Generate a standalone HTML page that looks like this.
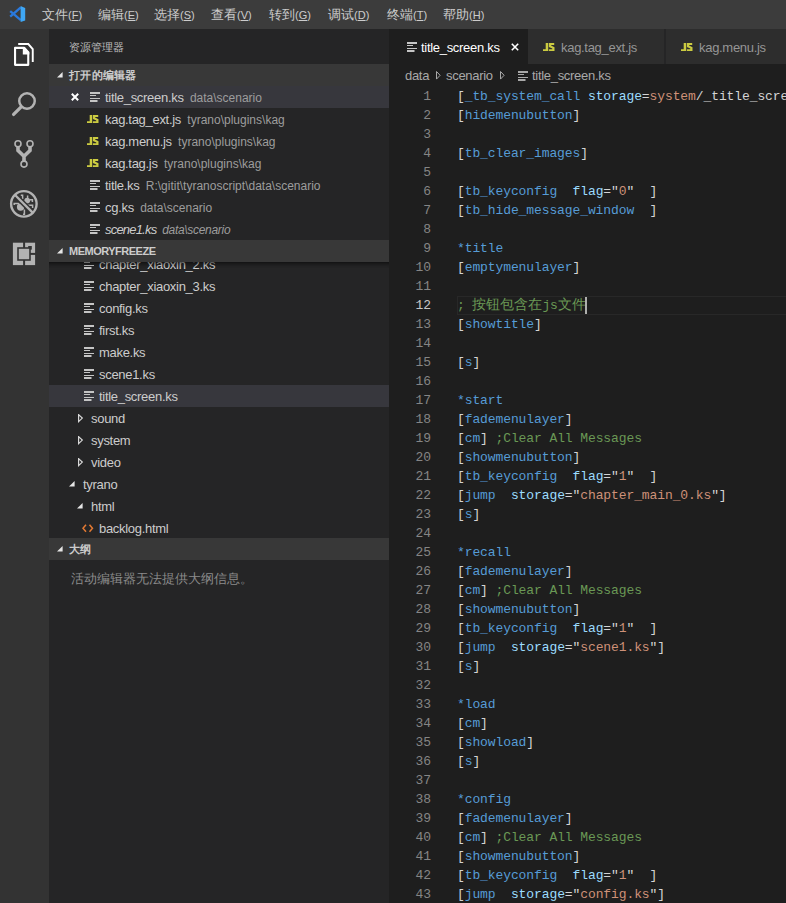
<!DOCTYPE html><html><head><meta charset="utf-8"><style>
*{margin:0;padding:0;box-sizing:border-box}
html,body{width:786px;height:903px;overflow:hidden;background:#1e1e1e;font-family:"Liberation Sans",sans-serif}
.abs{position:absolute}
.t{position:absolute;white-space:nowrap}
#title{left:0;top:0;width:786px;height:29px;background:#3c3c3c}
.menu{position:absolute;top:0;height:29px;line-height:29px;font-size:13px;color:#cccccc;white-space:nowrap}
#act{left:0;top:29px;width:49px;height:874px;background:#333333}
#side{left:49px;top:29px;width:340px;height:874px;background:#252526;overflow:hidden}
#editor{left:389px;top:29px;width:397px;height:874px;background:#1e1e1e;overflow:hidden}
.row{position:absolute;left:0;width:340px;height:22px;line-height:22px;font-size:13px;color:#cccccc;white-space:nowrap}
.nm{letter-spacing:-0.3px;top:1px}
.desc{font-size:12px;color:#9d9d9d;letter-spacing:0;margin-left:3px}
.hdr{position:absolute;left:0;width:340px;height:22px;line-height:22px;background:#383838;font-size:11px;font-weight:bold;color:#cccccc;letter-spacing:-0.5px}
.code{position:absolute;left:68px;font-family:"Liberation Mono",monospace;font-size:13px;letter-spacing:-0.1px;white-space:pre;height:19px;line-height:19px;color:#d4d4d4}
.ln{position:absolute;left:0;width:42px;text-align:right;font-family:"Liberation Mono",monospace;font-size:13px;letter-spacing:-0.1px;height:19px;line-height:19px;color:#858585}
.k{color:#569cd6}.p{color:#9cdcfe}.s{color:#ce9178}.c{color:#6a9955}
.cj{font-size:14px;letter-spacing:0}
</style></head><body>
<div id="title" class="abs">
<svg class="abs" style="left:0;top:0" width="30" height="29" viewBox="0 0 30 29"><path d="M10.2 11.2 L20.8 20.2" stroke="#2a79dd" stroke-width="2.3"/><path d="M10.2 16.6 L20.8 7.4" stroke="#2a79dd" stroke-width="2.3"/><path d="M20.6 6 L25.2 8 L25.2 20.4 L20.6 22 Z" fill="#3fa7f5"/></svg>
<div class="menu" style="left:42px">文件<span style="font-size:11px">(<u>F</u>)</span></div>
<div class="menu" style="left:98px">编辑<span style="font-size:11px">(<u>E</u>)</span></div>
<div class="menu" style="left:154px">选择<span style="font-size:11px">(<u>S</u>)</span></div>
<div class="menu" style="left:211px">查看<span style="font-size:11px">(<u>V</u>)</span></div>
<div class="menu" style="left:269px">转到<span style="font-size:11px">(<u>G</u>)</span></div>
<div class="menu" style="left:328px">调试<span style="font-size:11px">(<u>D</u>)</span></div>
<div class="menu" style="left:387px">终端<span style="font-size:11px">(<u>T</u>)</span></div>
<div class="menu" style="left:443px">帮助<span style="font-size:11px">(<u>H</u>)</span></div>
</div>
<div id="act" class="abs"></div>
<svg class="abs" style="left:0;top:0" width="49" height="300" viewBox="0 0 49 300"><path d="M15.05 47.85 H24.3 L28.25 52.2 V64.85 H15.05 Z" fill="none" stroke="#ffffff" stroke-width="2.1" stroke-linejoin="round"/><path d="M22.8 47 H24.6 L29.3 52.4 V54.4 H22.8 Z" fill="#ffffff"/><path d="M18.2 44 H28.3 L32.75 49 V62" fill="none" stroke="#ffffff" stroke-width="1.9"/><circle cx="27" cy="101" r="7.75" fill="none" stroke="#b3b3b3" stroke-width="2.5"/><path d="M21.2 106.8 L13.6 114.4" stroke="#b3b3b3" stroke-width="3.3" stroke-linecap="round"/><circle cx="18" cy="143.8" r="3.0" fill="none" stroke="#b3b3b3" stroke-width="1.6"/><circle cx="30" cy="143.8" r="3.0" fill="none" stroke="#b3b3b3" stroke-width="1.6"/><circle cx="24" cy="164.1" r="3.0" fill="none" stroke="#b3b3b3" stroke-width="1.6"/><path d="M18 146.5 V150.5 L24 156.3 L30 150.5 V146.5 M24 155 V161.3" fill="none" stroke="#b3b3b3" stroke-width="3.6"/><circle cx="23.85" cy="203.85" r="12.75" fill="none" stroke="#b3b3b3" stroke-width="2.4"/><ellipse cx="20.6" cy="207.0" rx="3.7" ry="3.7" fill="#b3b3b3"/><ellipse cx="27.2" cy="200.6" rx="2.9" ry="2.9" fill="#b3b3b3"/><path d="M14.2 205 V203.4 H19 M23 214.2 H24.4 V209.5 M20.8 195.3 H22.6 V199 M28 205.2 H32.6 V208 M29.5 199.8 H32.4 V202 M27.6 198 V195.6" fill="none" stroke="#b3b3b3" stroke-width="1.5"/><path d="M16.6 196.6 L31.1 211.1" stroke="#333333" stroke-width="5.2"/><path d="M14.8 194.8 L32.9 212.9" stroke="#b3b3b3" stroke-width="2.3"/><rect x="12.9" y="242.7" width="22.2" height="22.4" fill="#b3b3b3"/><rect x="17.2" y="247.2" width="13.6" height="13.6" fill="#333333"/><rect x="23.1" y="242" width="2" height="24" fill="#333333"/><rect x="30" y="252.9" width="6" height="2" fill="#333333"/><rect x="28.2" y="246" width="3.6" height="3.6" fill="#333333"/><rect x="18.8" y="248.8" width="10.4" height="10.4" fill="#b3b3b3"/></svg>
<div id="side" class="abs">
<div class="t" style="left:20px;top:1px;height:35px;line-height:35px;font-size:11px;color:#bbbbbb">资源管理器</div>
<div class="hdr" style="top:35px"><svg class="abs" style="left:7.5px;top:7.8px" width="6" height="6" viewBox="0 0 6 6"><path d="M5.6 0 V5.6 H0 Z" fill="#e6e6e6"/></svg><span class="t" style="left:20px;letter-spacing:0.3px">打开的编辑器</span></div>
<div class="row" style="top:57px;background:#37373d;"><svg class="abs" style="left:22px;top:7px" width="8" height="8" viewBox="0 0 8 8"><path d="M0.8 0.8 L7.2 7.2 M7.2 0.8 L0.8 7.2" stroke="#ffffff" stroke-width="2"/></svg><svg class="abs" style="left:41px;top:6px" width="10" height="10" viewBox="0 0 10 10"><rect x="0" y="0" width="10" height="2" fill="#c5c5c5"/><rect x="0" y="3" width="6" height="1" fill="#c5c5c5"/><rect x="0" y="6" width="10" height="1" fill="#c5c5c5"/><rect x="0" y="8" width="7.5" height="2" fill="#c5c5c5"/></svg><span class="t nm" style="left:56px;">title_screen.ks <span class="desc" style="">data\scenario</span></span></div>
<div class="row" style="top:79px;"><svg class="abs" style="left:38.2px;top:7.4px" width="12" height="9" viewBox="0 0 12 9"><path d="M2.7 0 H5.2 V8.1 H0 V6.2 H2.7 Z" fill="#cbcb41"/><path d="M5.9 0 H11.2 V2 H8.1 V2.6 L11.5 4.2 V8.1 H5.9 V6.2 H9.3 V5.5 L5.9 3.9 Z" fill="#cbcb41"/></svg><span class="t nm" style="left:56px;">kag.tag_ext.js <span class="desc" style="">tyrano\plugins\kag</span></span></div>
<div class="row" style="top:101px;"><svg class="abs" style="left:38.2px;top:7.4px" width="12" height="9" viewBox="0 0 12 9"><path d="M2.7 0 H5.2 V8.1 H0 V6.2 H2.7 Z" fill="#cbcb41"/><path d="M5.9 0 H11.2 V2 H8.1 V2.6 L11.5 4.2 V8.1 H5.9 V6.2 H9.3 V5.5 L5.9 3.9 Z" fill="#cbcb41"/></svg><span class="t nm" style="left:56px;">kag.menu.js <span class="desc" style="">tyrano\plugins\kag</span></span></div>
<div class="row" style="top:123px;"><svg class="abs" style="left:38.2px;top:7.4px" width="12" height="9" viewBox="0 0 12 9"><path d="M2.7 0 H5.2 V8.1 H0 V6.2 H2.7 Z" fill="#cbcb41"/><path d="M5.9 0 H11.2 V2 H8.1 V2.6 L11.5 4.2 V8.1 H5.9 V6.2 H9.3 V5.5 L5.9 3.9 Z" fill="#cbcb41"/></svg><span class="t nm" style="left:56px;">kag.tag.js <span class="desc" style="">tyrano\plugins\kag</span></span></div>
<div class="row" style="top:145px;"><svg class="abs" style="left:41px;top:6px" width="10" height="10" viewBox="0 0 10 10"><rect x="0" y="0" width="10" height="2" fill="#c5c5c5"/><rect x="0" y="3" width="6" height="1" fill="#c5c5c5"/><rect x="0" y="6" width="10" height="1" fill="#c5c5c5"/><rect x="0" y="8" width="7.5" height="2" fill="#c5c5c5"/></svg><span class="t nm" style="left:56px;">title.ks <span class="desc" style="">R:\gitit\tyranoscript\data\scenario</span></span></div>
<div class="row" style="top:167px;"><svg class="abs" style="left:41px;top:6px" width="10" height="10" viewBox="0 0 10 10"><rect x="0" y="0" width="10" height="2" fill="#c5c5c5"/><rect x="0" y="3" width="6" height="1" fill="#c5c5c5"/><rect x="0" y="6" width="10" height="1" fill="#c5c5c5"/><rect x="0" y="8" width="7.5" height="2" fill="#c5c5c5"/></svg><span class="t nm" style="left:56px;">cg.ks <span class="desc" style="">data\scenario</span></span></div>
<div class="row" style="top:189px;font-style:italic;"><svg class="abs" style="left:41px;top:6px" width="10" height="10" viewBox="0 0 10 10"><rect x="0" y="0" width="10" height="2" fill="#c5c5c5"/><rect x="0" y="3" width="6" height="1" fill="#c5c5c5"/><rect x="0" y="6" width="10" height="1" fill="#c5c5c5"/><rect x="0" y="8" width="7.5" height="2" fill="#c5c5c5"/></svg><span class="t nm" style="left:56px;letter-spacing:-0.8px;">scene1.ks <span class="desc" style="letter-spacing:-0.3px;">data\scenario</span></span></div>
<div class="row" style="top:224px;"><svg class="abs" style="left:35px;top:6px" width="10" height="10" viewBox="0 0 10 10"><rect x="0" y="0" width="10" height="2" fill="#c5c5c5"/><rect x="0" y="3" width="6" height="1" fill="#c5c5c5"/><rect x="0" y="6" width="10" height="1" fill="#c5c5c5"/><rect x="0" y="8" width="7.5" height="2" fill="#c5c5c5"/></svg><span class="t nm" style="left:50px">chapter_xiaoxin_2.ks</span></div>
<div class="row" style="top:246px;"><svg class="abs" style="left:35px;top:6px" width="10" height="10" viewBox="0 0 10 10"><rect x="0" y="0" width="10" height="2" fill="#c5c5c5"/><rect x="0" y="3" width="6" height="1" fill="#c5c5c5"/><rect x="0" y="6" width="10" height="1" fill="#c5c5c5"/><rect x="0" y="8" width="7.5" height="2" fill="#c5c5c5"/></svg><span class="t nm" style="left:50px">chapter_xiaoxin_3.ks</span></div>
<div class="row" style="top:268px;"><svg class="abs" style="left:35px;top:6px" width="10" height="10" viewBox="0 0 10 10"><rect x="0" y="0" width="10" height="2" fill="#c5c5c5"/><rect x="0" y="3" width="6" height="1" fill="#c5c5c5"/><rect x="0" y="6" width="10" height="1" fill="#c5c5c5"/><rect x="0" y="8" width="7.5" height="2" fill="#c5c5c5"/></svg><span class="t nm" style="left:50px">config.ks</span></div>
<div class="row" style="top:290px;"><svg class="abs" style="left:35px;top:6px" width="10" height="10" viewBox="0 0 10 10"><rect x="0" y="0" width="10" height="2" fill="#c5c5c5"/><rect x="0" y="3" width="6" height="1" fill="#c5c5c5"/><rect x="0" y="6" width="10" height="1" fill="#c5c5c5"/><rect x="0" y="8" width="7.5" height="2" fill="#c5c5c5"/></svg><span class="t nm" style="left:50px">first.ks</span></div>
<div class="row" style="top:312px;"><svg class="abs" style="left:35px;top:6px" width="10" height="10" viewBox="0 0 10 10"><rect x="0" y="0" width="10" height="2" fill="#c5c5c5"/><rect x="0" y="3" width="6" height="1" fill="#c5c5c5"/><rect x="0" y="6" width="10" height="1" fill="#c5c5c5"/><rect x="0" y="8" width="7.5" height="2" fill="#c5c5c5"/></svg><span class="t nm" style="left:50px">make.ks</span></div>
<div class="row" style="top:334px;"><svg class="abs" style="left:35px;top:6px" width="10" height="10" viewBox="0 0 10 10"><rect x="0" y="0" width="10" height="2" fill="#c5c5c5"/><rect x="0" y="3" width="6" height="1" fill="#c5c5c5"/><rect x="0" y="6" width="10" height="1" fill="#c5c5c5"/><rect x="0" y="8" width="7.5" height="2" fill="#c5c5c5"/></svg><span class="t nm" style="left:50px">scene1.ks</span></div>
<div class="row" style="top:356px;background:#37373d;"><svg class="abs" style="left:35px;top:6px" width="10" height="10" viewBox="0 0 10 10"><rect x="0" y="0" width="10" height="2" fill="#c5c5c5"/><rect x="0" y="3" width="6" height="1" fill="#c5c5c5"/><rect x="0" y="6" width="10" height="1" fill="#c5c5c5"/><rect x="0" y="8" width="7.5" height="2" fill="#c5c5c5"/></svg><span class="t nm" style="left:50px">title_screen.ks</span></div>
<div class="row" style="top:378px;"><svg class="abs" style="left:28.5px;top:7px" width="6" height="9" viewBox="0 0 6 9"><path d="M0.6 0.6 L4.3 4.1 L0.6 7.6 Z" fill="none" stroke="#d8d8d8" stroke-width="1.2"/></svg><span class="t nm" style="left:42px">sound</span></div>
<div class="row" style="top:400px;"><svg class="abs" style="left:28.5px;top:7px" width="6" height="9" viewBox="0 0 6 9"><path d="M0.6 0.6 L4.3 4.1 L0.6 7.6 Z" fill="none" stroke="#d8d8d8" stroke-width="1.2"/></svg><span class="t nm" style="left:42px">system</span></div>
<div class="row" style="top:422px;"><svg class="abs" style="left:28.5px;top:7px" width="6" height="9" viewBox="0 0 6 9"><path d="M0.6 0.6 L4.3 4.1 L0.6 7.6 Z" fill="none" stroke="#d8d8d8" stroke-width="1.2"/></svg><span class="t nm" style="left:42px">video</span></div>
<div class="row" style="top:444px;"><svg class="abs" style="left:20.4px;top:7.6px" width="6" height="6" viewBox="0 0 6 6"><path d="M5.6 0 V5.6 H0 Z" fill="#e6e6e6"/></svg><span class="t nm" style="left:34px">tyrano</span></div>
<div class="row" style="top:466px;"><svg class="abs" style="left:28.3px;top:7.5px" width="6" height="6" viewBox="0 0 6 6"><path d="M5.6 0 V5.6 H0 Z" fill="#e6e6e6"/></svg><span class="t nm" style="left:42px">html</span></div>
<div class="row" style="top:488px;"><svg class="abs" style="left:32.5px;top:6.5px" width="12" height="9" viewBox="0 0 12 9"><path d="M4 0.8 L1 4.3 L4 7.8 M7.5 0.8 L10.5 4.3 L7.5 7.8" fill="none" stroke="#e37933" stroke-width="1.5"/></svg><span class="t nm" style="left:50px">backlog.html</span></div>
<div class="abs" style="left:0;top:233px;width:340px;height:6px;box-shadow:#000000 0 6px 6px -6px inset"></div>
<div class="hdr" style="top:211px"><svg class="abs" style="left:7.5px;top:7.8px" width="6" height="6" viewBox="0 0 6 6"><path d="M5.6 0 V5.6 H0 Z" fill="#e6e6e6"/></svg><span class="t" style="left:20px">MEMORYFREEZE</span></div>
<div class="hdr" style="top:509px"><svg class="abs" style="left:7.5px;top:7.8px" width="6" height="6" viewBox="0 0 6 6"><path d="M5.6 0 V5.6 H0 Z" fill="#e6e6e6"/></svg><span class="t" style="left:20px;letter-spacing:0.3px">大纲</span></div>
<div class="t" style="left:22px;top:539px;height:22px;line-height:22px;font-size:13px;color:#8b8b8b">活动编辑器无法提供大纲信息。</div>
</div>
<div id="editor" class="abs">
<div class="abs" style="left:0;top:0;width:397px;height:35px;background:#252526"></div>
<div class="abs" style="left:0;top:0;width:139px;height:35px;background:#1e1e1e"></div>
<div class="abs" style="left:139px;top:0;width:136px;height:35px;background:#2d2d2d"></div>
<div class="abs" style="left:277px;top:0;width:120px;height:35px;background:#2d2d2d"></div>
<svg class="abs" style="left:17.5px;top:13px" width="10" height="10" viewBox="0 0 10 10"><rect x="0" y="0" width="10" height="2" fill="#c5c5c5"/><rect x="0" y="3" width="6" height="1" fill="#c5c5c5"/><rect x="0" y="6" width="10" height="1" fill="#c5c5c5"/><rect x="0" y="8" width="7.5" height="2" fill="#c5c5c5"/></svg>
<div class="t nm" style="left:32px;top:1px;height:35px;line-height:35px;font-size:13px;color:#ffffff">title_screen.ks</div>
<svg class="abs" style="left:122px;top:14px" width="8" height="8" viewBox="0 0 8 8"><path d="M0.8 0.8 L7.2 7.2 M7.2 0.8 L0.8 7.2" stroke="#ffffff" stroke-width="1.6"/></svg>
<svg class="abs" style="left:154px;top:13.7px" width="12" height="9" viewBox="0 0 12 9"><path d="M2.7 0 H5.2 V8.1 H0 V6.2 H2.7 Z" fill="#cbcb41"/><path d="M5.9 0 H11.2 V2 H8.1 V2.6 L11.5 4.2 V8.1 H5.9 V6.2 H9.3 V5.5 L5.9 3.9 Z" fill="#cbcb41"/></svg>
<div class="t nm" style="left:172px;top:1px;height:35px;line-height:35px;font-size:13px;color:#969696">kag.tag_ext.js</div>
<svg class="abs" style="left:292.4px;top:13.7px" width="12" height="9" viewBox="0 0 12 9"><path d="M2.7 0 H5.2 V8.1 H0 V6.2 H2.7 Z" fill="#cbcb41"/><path d="M5.9 0 H11.2 V2 H8.1 V2.6 L11.5 4.2 V8.1 H5.9 V6.2 H9.3 V5.5 L5.9 3.9 Z" fill="#cbcb41"/></svg>
<div class="t nm" style="left:310px;top:1px;height:35px;line-height:35px;font-size:13px;color:#969696">kag.menu.js</div>
<div class="t nm" style="left:16px;top:36px;height:22px;line-height:22px;font-size:13px;color:#a9a9a9">data</div>
<svg class="abs" style="left:47px;top:42px" width="5" height="9" viewBox="0 0 5 9"><path d="M0.5 0.5 L4.1 4.3 L0.5 8.1 Z" fill="none" stroke="#a9a9a9" stroke-width="1"/></svg>
<div class="t nm" style="left:57px;top:36px;height:22px;line-height:22px;font-size:13px;color:#a9a9a9">scenario</div>
<svg class="abs" style="left:110.6px;top:42px" width="5" height="9" viewBox="0 0 5 9"><path d="M0.5 0.5 L4.1 4.3 L0.5 8.1 Z" fill="none" stroke="#a9a9a9" stroke-width="1"/></svg>
<svg class="abs" style="left:128.5px;top:41.5px" width="10" height="10" viewBox="0 0 10 10"><rect x="0" y="0" width="10" height="2" fill="#a9a9a9"/><rect x="0" y="3" width="6" height="1" fill="#a9a9a9"/><rect x="0" y="6" width="10" height="1" fill="#a9a9a9"/><rect x="0" y="8" width="7.5" height="2" fill="#a9a9a9"/></svg>
<div class="t nm" style="left:143px;top:36px;height:22px;line-height:22px;font-size:13px;color:#a9a9a9">title_screen.ks</div>
<div class="ln" style="top:58px;">1</div>
<div class="code" style="top:58px">[<span class="k">_tb_system_call</span> <span class="p">storage</span>=<span class="s">system</span>/_title_screen.ks]</div>
<div class="ln" style="top:77px;">2</div>
<div class="code" style="top:77px">[<span class="k">hidemenubutton</span>]</div>
<div class="ln" style="top:96px;">3</div>
<div class="code" style="top:96px"></div>
<div class="ln" style="top:115px;">4</div>
<div class="code" style="top:115px">[<span class="k">tb_clear_images</span>]</div>
<div class="ln" style="top:134px;">5</div>
<div class="code" style="top:134px"></div>
<div class="ln" style="top:153px;">6</div>
<div class="code" style="top:153px">[<span class="k">tb_keyconfig</span>  <span class="p">flag</span>="<span class="s">0</span>"  ]</div>
<div class="ln" style="top:172px;">7</div>
<div class="code" style="top:172px">[<span class="k">tb_hide_message_window</span>  ]</div>
<div class="ln" style="top:191px;">8</div>
<div class="code" style="top:191px"></div>
<div class="ln" style="top:210px;">9</div>
<div class="code" style="top:210px"><span class="k">*title</span></div>
<div class="ln" style="top:229px;">10</div>
<div class="code" style="top:229px">[<span class="k">emptymenulayer</span>]</div>
<div class="ln" style="top:248px;">11</div>
<div class="code" style="top:248px"></div>
<div class="abs" style="left:68px;top:267px;width:340px;height:19px;border:1px solid #282828"></div>
<div class="ln" style="top:267px;color:#c6c6c6;">12</div>
<div class="code" style="top:267px"><span class="c">; <span class="cj">按钮包含在</span>js<span class="cj">文件</span></span></div>
<div class="ln" style="top:286px;">13</div>
<div class="code" style="top:286px">[<span class="k">showtitle</span>]</div>
<div class="ln" style="top:305px;">14</div>
<div class="code" style="top:305px"></div>
<div class="ln" style="top:324px;">15</div>
<div class="code" style="top:324px">[<span class="k">s</span>]</div>
<div class="ln" style="top:343px;">16</div>
<div class="code" style="top:343px"></div>
<div class="ln" style="top:362px;">17</div>
<div class="code" style="top:362px"><span class="k">*start</span></div>
<div class="ln" style="top:381px;">18</div>
<div class="code" style="top:381px">[<span class="k">fademenulayer</span>]</div>
<div class="ln" style="top:400px;">19</div>
<div class="code" style="top:400px">[<span class="k">cm</span>] <span class="c">;Clear All Messages</span></div>
<div class="ln" style="top:419px;">20</div>
<div class="code" style="top:419px">[<span class="k">showmenubutton</span>]</div>
<div class="ln" style="top:438px;">21</div>
<div class="code" style="top:438px">[<span class="k">tb_keyconfig</span>  <span class="p">flag</span>="<span class="s">1</span>"  ]</div>
<div class="ln" style="top:457px;">22</div>
<div class="code" style="top:457px">[<span class="k">jump</span>  <span class="p">storage</span>="<span class="s">chapter_main_0.ks</span>"]</div>
<div class="ln" style="top:476px;">23</div>
<div class="code" style="top:476px">[<span class="k">s</span>]</div>
<div class="ln" style="top:495px;">24</div>
<div class="code" style="top:495px"></div>
<div class="ln" style="top:514px;">25</div>
<div class="code" style="top:514px"><span class="k">*recall</span></div>
<div class="ln" style="top:533px;">26</div>
<div class="code" style="top:533px">[<span class="k">fademenulayer</span>]</div>
<div class="ln" style="top:552px;">27</div>
<div class="code" style="top:552px">[<span class="k">cm</span>] <span class="c">;Clear All Messages</span></div>
<div class="ln" style="top:571px;">28</div>
<div class="code" style="top:571px">[<span class="k">showmenubutton</span>]</div>
<div class="ln" style="top:590px;">29</div>
<div class="code" style="top:590px">[<span class="k">tb_keyconfig</span>  <span class="p">flag</span>="<span class="s">1</span>"  ]</div>
<div class="ln" style="top:609px;">30</div>
<div class="code" style="top:609px">[<span class="k">jump</span>  <span class="p">storage</span>="<span class="s">scene1.ks</span>"]</div>
<div class="ln" style="top:628px;">31</div>
<div class="code" style="top:628px">[<span class="k">s</span>]</div>
<div class="ln" style="top:647px;">32</div>
<div class="code" style="top:647px"></div>
<div class="ln" style="top:666px;">33</div>
<div class="code" style="top:666px"><span class="k">*load</span></div>
<div class="ln" style="top:685px;">34</div>
<div class="code" style="top:685px">[<span class="k">cm</span>]</div>
<div class="ln" style="top:704px;">35</div>
<div class="code" style="top:704px">[<span class="k">showload</span>]</div>
<div class="ln" style="top:723px;">36</div>
<div class="code" style="top:723px">[<span class="k">s</span>]</div>
<div class="ln" style="top:742px;">37</div>
<div class="code" style="top:742px"></div>
<div class="ln" style="top:761px;">38</div>
<div class="code" style="top:761px"><span class="k">*config</span></div>
<div class="ln" style="top:780px;">39</div>
<div class="code" style="top:780px">[<span class="k">fademenulayer</span>]</div>
<div class="ln" style="top:799px;">40</div>
<div class="code" style="top:799px">[<span class="k">cm</span>] <span class="c">;Clear All Messages</span></div>
<div class="ln" style="top:818px;">41</div>
<div class="code" style="top:818px">[<span class="k">showmenubutton</span>]</div>
<div class="ln" style="top:837px;">42</div>
<div class="code" style="top:837px">[<span class="k">tb_keyconfig</span>  <span class="p">flag</span>="<span class="s">1</span>"  ]</div>
<div class="ln" style="top:856px;">43</div>
<div class="code" style="top:856px">[<span class="k">jump</span>  <span class="p">storage</span>="<span class="s">config.ks</span>"]</div>
<div class="ln" style="top:875px;">44</div>
<div class="code" style="top:875px"></div>
<div class="abs" style="left:196px;top:268px;width:2px;height:17px;background:#aeafad"></div>
</div>
</body></html>
